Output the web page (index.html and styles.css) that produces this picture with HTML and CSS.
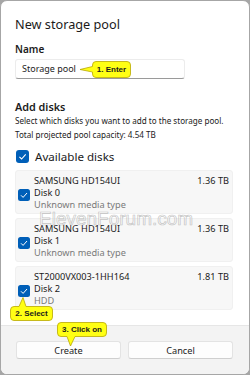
FILE: index.html
```html
<!DOCTYPE html>
<html>
<head>
<meta charset="utf-8">
<link rel="stylesheet" href="styles.css">
</head>
<body>
<div class="dialog">
  <div class="content">
    <h1 class="title">New storage pool</h1>
    <div class="label">Name</div>
    <div class="input">Storage pool</div>
    <h2 class="section">Add disks</h2>
    <p class="desc">Select which disks you want to add to the storage pool.</p>
    <p class="desc total">Total projected pool capacity: 4.54 TB</p>
    <div class="avail">
      <svg class="cb cb-big" viewBox="0 0 13 13"><rect width="13" height="13" rx="3" fill="#005fb8"/><path d="M3.4 6.8 L5.6 9 L9.7 4.3" fill="none" stroke="#fff" stroke-width="1.1"/></svg>
      <span>Available disks</span>
    </div>
    <div class="disks">
      <div class="disk">
        <svg class="cb" viewBox="0 0 12 12"><rect width="12" height="12" rx="2.5" fill="#005fb8"/><path d="M3 6.3 L5.1 8.4 L9 4" fill="none" stroke="#fff" stroke-width="1"/></svg>
        <div class="info">
          <div class="name">SAMSUNG HD154UI</div>
          <div>Disk 0</div>
          <div class="muted">Unknown media type</div>
        </div>
        <div class="size">1.36 TB</div>
      </div>
      <div class="disk">
        <svg class="cb" viewBox="0 0 12 12"><rect width="12" height="12" rx="2.5" fill="#005fb8"/><path d="M3 6.3 L5.1 8.4 L9 4" fill="none" stroke="#fff" stroke-width="1"/></svg>
        <div class="info">
          <div class="name">SAMSUNG HD154UI</div>
          <div>Disk 1</div>
          <div class="muted">Unknown media type</div>
        </div>
        <div class="size">1.36 TB</div>
      </div>
      <div class="disk">
        <svg class="cb" viewBox="0 0 12 12"><rect width="12" height="12" rx="2.5" fill="#005fb8"/><path d="M3 6.3 L5.1 8.4 L9 4" fill="none" stroke="#fff" stroke-width="1"/></svg>
        <div class="info">
          <div class="name">ST2000VX003-1HH164</div>
          <div>Disk 2</div>
          <div class="muted">HDD</div>
        </div>
        <div class="size">1.81 TB</div>
      </div>
    </div>
  </div>
  <div class="footer">
    <button class="btn">Create</button>
    <button class="btn">Cancel</button>
  </div>

  <div class="watermark">ElevenForum.com</div>

  <div class="callout co1">
    <svg class="co-shape" viewBox="0 0 39 17"><path d="M4,0.5 H35 Q38.5,0.5 38.5,4 V13 Q38.5,16.5 35,16.5 H4 Q0.5,16.5 0.5,13 V11 L-12,8.5 L0.5,5.5 V4 Q0.5,0.5 4,0.5 Z"/></svg>
    <span>1. Enter</span>
  </div>
  <div class="callout co2">
    <svg class="co-shape" viewBox="0 0 43 15"><path d="M4,0.5 H9 L13,-8.5 L16,0.5 H39 Q42.5,0.5 42.5,4 V11 Q42.5,14.5 39,14.5 H4 Q0.5,14.5 0.5,11 V4 Q0.5,0.5 4,0.5 Z"/></svg>
    <span>2. Select</span>
  </div>
  <div class="callout co3">
    <svg class="co-shape" viewBox="0 0 50 15"><path d="M4,0.5 H46 Q49.5,0.5 49.5,4 V11 Q49.5,14.5 46,14.5 H18 L13.5,24 L10,14.5 H4 Q0.5,14.5 0.5,11 V4 Q0.5,0.5 4,0.5 Z"/></svg>
    <span>3. Click on</span>
  </div>
</div>
</body>
</html>
```

FILE: styles.css
```css
* { box-sizing: border-box; }
html, body { margin: 0; padding: 0; }
body {
  background: #a6a6a6;
  font-family: "Noto Sans", "Open Sans", sans-serif;
  color: #1b1b1b;
}
.dialog {
  position: relative;
  width: 250px;
  height: 375px;
  border: 1px solid #a6a6a6;
  border-radius: 7px;
  background: #fff;
  overflow: hidden;
  display: flex;
  flex-direction: column;
}
.content {
  flex: 1;
  padding: 15px 16px 0 14px;
}
.title {
  margin: 0;
  font-size: 12.7px;
  line-height: 16px;
  font-weight: 400;
}
.label {
  margin-top: 11px;
  font-size: 10px;
  line-height: 13px;
  font-weight: 600;
}
.input {
  margin-top: 3px;
  width: 170px;
  height: 20px;
  border: 1px solid #ececec;
  border-bottom-color: #9a9a9a;
  border-radius: 3px;
  padding: 0 6px;
  font-size: 9px;
  line-height: 18px;
  color: #1b1b1b;
}
.section {
  margin: 21px 0 0;
  font-size: 10.8px;
  line-height: 14px;
  font-weight: 600;
}
.desc {
  margin: 1px 0 0;
  font-size: 8.1px;
  line-height: 12px;
  white-space: nowrap;
}
.total { margin-top: 2px; }
.avail {
  margin-top: 8px;
  display: flex;
  align-items: center;
  gap: 6px;
  padding-left: 1px;
  height: 15px;
  font-size: 11.6px;
}
.cb { width: 12px; height: 12px; flex: none; }
.cb-big { width: 13px; height: 13px; }
.disks {
  margin-top: 6px;
  display: flex;
  flex-direction: column;
  gap: 4px;
}
.disk {
  height: 44px;
  background: #f7f7f7;
  border: 1px solid #f0f0f0;
  border-radius: 3px;
  display: grid;
  grid-template-columns: 12px 1fr auto;
  column-gap: 4px;
  padding: 4px 3px 0 2px;
  font-size: 9.2px;
  line-height: 12px;
  white-space: nowrap;
}
.disk .cb { margin-top: 14px; }
.muted { color: #7a7a7a; }
.size { text-align: right; }
.footer {
  height: 49px;
  flex: none;
  background: #f3f3f3;
  border-top: 1px solid #e6e6e6;
  padding: 15px 16px 0 15px;
  display: grid;
  grid-template-columns: 1fr 1fr;
  column-gap: 7px;
  align-content: start;
}
.btn {
  height: 18px;
  background: #fdfdfd;
  border: 1px solid #e3e3e3;
  border-bottom-color: #cfcfcf;
  border-radius: 3px;
  font-family: inherit;
  font-size: 9.2px;
  color: #1b1b1b;
  padding: 0;
}
.watermark {
  position: absolute;
  left: 38px;
  top: 207px;
  font-family: "Liberation Sans", Arial, sans-serif;
  font-size: 19px;
  color: rgba(255,255,255,0.5);
  -webkit-text-stroke: 0.7px rgba(140,140,140,0.5);
  pointer-events: none;
}
.callout {
  position: absolute;
  display: flex;
  align-items: center;
  justify-content: center;
  font-family: "Liberation Sans", Arial, sans-serif;
  font-weight: 700;
  font-size: 8px;
  color: #1b1b1b;
}
.callout span { position: relative; }
.co-shape {
  position: absolute;
  left: 0; top: 0;
  width: 100%; height: 100%;
  overflow: visible;
}
.co-shape path {
  fill: #ffff14;
  stroke: #b9a800;
  stroke-width: 0.8;
}
.co1 { left: 91px; top: 60px; width: 39px; height: 17px; }
.co2 { left: 9px; top: 305px; width: 43px; height: 15px; }
.co3 { left: 56px; top: 321px; width: 50px; height: 15px; }
```
